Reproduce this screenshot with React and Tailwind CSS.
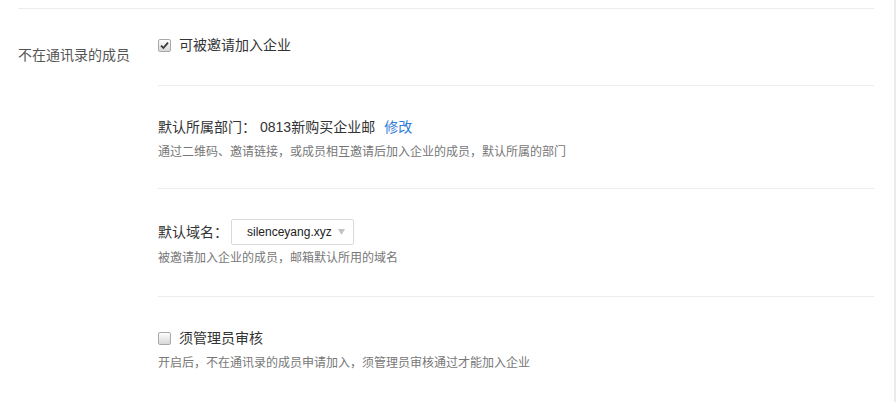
import React, { useState } from "react";

const FONT = { fontFamily: '"Liberation Sans", "Noto Sans CJK SC", sans-serif' };

// fake native checkbox, greyish like the old chrome one
const CheckBox = ({ checked, onChange }) => (
    <button
        type="button"
        onClick={onChange}
        className="w-[13px] h-[13px] rounded-[2px] border border-[#a9a9a9] bg-gradient-to-b from-[#fdfdfd] to-[#d8d8d8] flex items-center justify-center shrink-0"
    >
        {checked && (
            <svg width="9" height="9" viewBox="0 0 9 9">
                <path d="M1 4.6 L3.4 7 L8 1.6" fill="none" stroke="#3a3a3a" strokeWidth="1.8" />
            </svg>
        )}
    </button>
);

const Divider = () => <div className="h-px bg-[#ececec]" />;

const App = () => {
    const [invite, setInvite] = useState(true);
    const [review, setReview] = useState(false);

    return (
        <div className="w-[896px] h-[402px] bg-white flex text-[#333] overflow-hidden" style={FONT}>
            <div className="flex-1 pl-[18px] pr-[20px]">
                <div className="mt-[8px]">
                    <Divider />
                </div>

                <div className="flex">
                    {/* left label */}
                    <div className="w-[140px] pt-[36px] text-[14px] leading-[20px] text-[#555]">
                        不在通讯录的成员
                    </div>

                    {/* options */}
                    <div className="flex-1">
                        <div className="pt-[26px] pb-[30px]">
                            <div className="flex items-center h-[20px] gap-[8px]">
                                <CheckBox checked={invite} onChange={() => setInvite(!invite)} />
                                <span className="text-[14px]">可被邀请加入企业</span>
                            </div>
                        </div>
                        <Divider />

                        <div className="pt-[31px] pb-[27px]">
                            <div className="h-[20px] flex items-center text-[14px]">
                                <span>默认所属部门：</span>
                                <span className="ml-[4px]">0813新购买企业邮</span>
                                <a href="#" className="ml-[9px] text-[#2f7bd8]">修改</a>
                            </div>
                            <p className="mt-[6px] text-[12px] leading-[18px] text-[#777]">
                                通过二维码、邀请链接，或成员相互邀请后加入企业的成员，默认所属的部门
                            </p>
                        </div>
                        <Divider />

                        <div className="pt-[30px] pb-[29px]">
                            <div className="flex items-center text-[14px]">
                                <span className="w-[73px]">默认域名：</span>
                                <div className="w-[123px] h-[26px] border border-[#d9d9d9] rounded-[2px] flex items-center pl-[15px] pr-[8px] text-[12px] text-[#222]">
                                    <span className="flex-1">silenceyang.xyz</span>
                                    <svg width="7" height="6" viewBox="0 0 7 6">
                                        <path d="M0 0 H7 L3.5 6 Z" fill="#c4c4c4" />
                                    </svg>
                                </div>
                            </div>
                            <p className="mt-[4px] text-[12px] leading-[18px] text-[#777]">
                                被邀请加入企业的成员，邮箱默认所用的域名
                            </p>
                        </div>
                        <Divider />

                        <div className="pt-[31px]">
                            <div className="flex items-center h-[20px] gap-[8px]">
                                <CheckBox checked={review} onChange={() => setReview(!review)} />
                                <span className="text-[14px]">须管理员审核</span>
                            </div>
                            <p className="mt-[6px] text-[12px] leading-[18px] text-[#777]">
                                开启后，不在通讯录的成员申请加入，须管理员审核通过才能加入企业
                            </p>
                        </div>
                    </div>
                </div>
            </div>
            <div className="w-[2px] bg-[#ebebeb]" />
        </div>
    );
};

export default App;
